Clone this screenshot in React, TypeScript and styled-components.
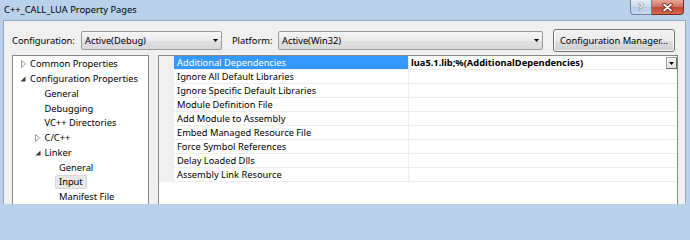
import React from "react";
import styled, { createGlobalStyle } from "styled-components";

const GlobalStyle = createGlobalStyle`
  html, body {
    margin: 0;
    padding: 0;
    background: #b9d1ea;
  }
  body {
    font-family: "Noto Sans", "Open Sans", sans-serif;
    font-size: 9.3px;
    color: #000;
  }
  * {
    box-sizing: border-box;
  }
`;

const Window = styled.div`
  width: 690px;
  height: 204px;
  overflow: hidden;
  display: flex;
  flex-direction: column;
  background: #b9d1ea;
  padding: 0 4px 0 3px;
`;

const TitleBar = styled.div`
  height: 20px;
  flex: none;
  display: flex;
  align-items: flex-start;
  justify-content: space-between;
`;

const Title = styled.span`
  line-height: 19px;
  padding-left: 1px;
  white-space: nowrap;
`;

const CaptionButtons = styled.div`
  display: flex;
  margin-right: 2px;
`;

const CaptionButton = styled.div<{ $close?: boolean }>`
  width: ${({ $close }) => ($close ? 32 : 22)}px;
  height: 15px;
  display: flex;
  align-items: center;
  justify-content: center;
  border: 1px solid ${({ $close }) => ($close ? "#7a2a22" : "#6f84a3")};
  border-top: none;
  border-left-width: ${({ $close }) => ($close ? 0 : 1)}px;
  border-radius: ${({ $close }) => ($close ? "0 0 4px 0" : "0 0 0 4px")};
  background: ${({ $close }) =>
    $close
      ? "linear-gradient(#e6a595, #d2705f 50%, #c5432f 51%, #d36b4c)"
      : "linear-gradient(#e3ecf7, #cbdbee 50%, #b8cce6 51%, #c9daef)"};
  color: #fff;
  font-size: 10px;
  font-weight: bold;
  text-shadow: 0 0 1px #3a4a60, 0 0 1px #3a4a60;
`;

const Dialog = styled.div`
  flex: 1;
  min-height: 0;
  display: flex;
  flex-direction: column;
  background: #f0f0f0;
  border: 1px solid #98a9bd;
  border-bottom: none;
  padding: 8px 7px 0 8px;
`;

const Toolbar = styled.div`
  height: 23px;
  flex: none;
  display: flex;
  align-items: center;
`;

const Label = styled.span<{ $width: number; $gap?: number }>`
  width: ${({ $width }) => $width}px;
  margin-left: ${({ $gap }) => $gap ?? 0}px;
  flex: none;
  white-space: nowrap;
`;

const Combo = styled.div<{ $width: number }>`
  width: ${({ $width }) => $width}px;
  height: 19px;
  flex: none;
  display: flex;
  align-items: center;
  justify-content: space-between;
  padding: 0 3px 0 3px;
  border: 1px solid #9b9b9b;
  border-radius: 2px;
  background: linear-gradient(#f7f7f7, #e9e9e9 50%, #e0e0e0 51%, #d9d9d9);
  white-space: nowrap;
`;

const Button = styled.div`
  width: 122px;
  height: 23px;
  margin-left: 10px;
  flex: none;
  display: flex;
  align-items: center;
  justify-content: center;
  border: 1px solid #707070;
  border-radius: 3px;
  background: linear-gradient(#f2f2f2, #ebebeb 50%, #dddddd 51%, #cfcfcf);
  box-shadow: inset 0 0 0 1px #fcfcfc;
  white-space: nowrap;
`;

const Content = styled.div`
  flex: 1;
  min-height: 0;
  margin-top: 3px;
  display: flex;
  gap: 9px;
`;

const Tree = styled.div`
  width: 137px;
  flex: none;
  background: #fff;
  border: 1px solid #828790;
  border-bottom: none;
  padding-top: 1px;
`;

const TreeRow = styled.div<{ $level: number }>`
  height: 14.74px;
  display: flex;
  align-items: center;
  padding-left: ${({ $level }) => 3 + $level * 14.5}px;
  white-space: nowrap;
`;

const Expander = styled.span`
  width: 14px;
  height: 14px;
  flex: none;
  display: flex;
  align-items: center;
  justify-content: center;
`;

const TreeLabel = styled.span<{ $selected?: boolean }>`
  line-height: 12px;
  padding: 0 3px;
  margin-left: -4px;
  border: 1px solid ${({ $selected }) => ($selected ? "#d9d9d9" : "transparent")};
  border-radius: 2px;
  background: ${({ $selected }) => ($selected ? "#e8e8e8" : "transparent")};
`;

const Grid = styled.div`
  flex: 1;
  min-width: 0;
  background: #fff;
  border: 1px solid #828790;
  border-bottom: none;
`;

const GridRow = styled.div`
  height: 14px;
  display: flex;
`;

const Gutter = styled.div`
  width: 15px;
  flex: none;
  background: #f0f0f0;
`;

const NameCell = styled.div<{ $selected?: boolean }>`
  width: 234px;
  flex: none;
  display: flex;
  align-items: center;
  padding-left: 3px;
  border-bottom: 1px solid #ededed;
  background: ${({ $selected }) => ($selected ? "#3399ff" : "#fff")};
  color: ${({ $selected }) => ($selected ? "#fff" : "#000")};
  white-space: nowrap;
`;

const ValueCell = styled.div`
  flex: 1;
  min-width: 0;
  display: flex;
  align-items: center;
  justify-content: space-between;
  padding-left: 2px;
  border-left: 1px solid #ededed;
  border-bottom: 1px solid #ededed;
  white-space: nowrap;
`;

const Value = styled.span`
  font-weight: bold;
`;

const DropButton = styled.span`
  width: 11px;
  height: 12px;
  align-self: flex-start;
  margin-top: 1px;
  display: flex;
  align-items: center;
  justify-content: center;
  border: 1px solid #a0a0a0;
  border-right-color: #6a6a6a;
  border-bottom-color: #6a6a6a;
  background: linear-gradient(#f8f8f8, #e2e2e2);
`;

const DownArrow = () => (
  <svg width="5" height="3" viewBox="0 0 5 3">
    <path d="M0 0 H5 L2.5 3 Z" fill="#000" />
  </svg>
);

const Collapsed = () => (
  <svg width="5" height="8" viewBox="0 0 5 8">
    <path d="M0.5 0.5 L4.5 4 L0.5 7.5 Z" fill="#fff" stroke="#9a9a9a" strokeWidth="1" />
  </svg>
);

const Expanded = () => (
  <svg width="6" height="6" viewBox="0 0 6 6">
    <path d="M5.5 0.5 V5.5 H0.5 Z" fill="#3c3c3c" />
  </svg>
);

const CloseGlyph = () => (
  <svg width="11" height="9" viewBox="0 0 11 9">
    <path d="M2 1.5 L9 7.5 M9 1.5 L2 7.5" stroke="#5b1e16" strokeWidth="3.4" strokeLinecap="round" />
    <path d="M2 1.5 L9 7.5 M9 1.5 L2 7.5" stroke="#fff" strokeWidth="1.8" strokeLinecap="round" />
  </svg>
);

type Node = { label: string; level: number; state?: "open" | "closed"; selected?: boolean };

const treeNodes: Node[] = [
  { label: "Common Properties", level: 0, state: "closed" },
  { label: "Configuration Properties", level: 0, state: "open" },
  { label: "General", level: 1 },
  { label: "Debugging", level: 1 },
  { label: "VC++ Directories", level: 1 },
  { label: "C/C++", level: 1, state: "closed" },
  { label: "Linker", level: 1, state: "open" },
  { label: "General", level: 2 },
  { label: "Input", level: 2, selected: true },
  { label: "Manifest File", level: 2 },
];

const properties = [
  "Additional Dependencies",
  "Ignore All Default Libraries",
  "Ignore Specific Default Libraries",
  "Module Definition File",
  "Add Module to Assembly",
  "Embed Managed Resource File",
  "Force Symbol References",
  "Delay Loaded Dlls",
  "Assembly Link Resource",
];

const App: React.FC = () => {
  return (
    <>
      <GlobalStyle />
      <Window>
        <TitleBar>
          <Title>C++_CALL_LUA Property Pages</Title>
          <CaptionButtons>
            <CaptionButton>?</CaptionButton>
            <CaptionButton $close>
              <CloseGlyph />
            </CaptionButton>
          </CaptionButtons>
        </TitleBar>
        <Dialog>
          <Toolbar>
            <Label $width={69}>Configuration:</Label>
            <Combo $width={141}>
              Active(Debug)
              <DownArrow />
            </Combo>
            <Label $width={46} $gap={10}>
              Platform:
            </Label>
            <Combo $width={265}>
              Active(Win32)
              <DownArrow />
            </Combo>
            <Button>Configuration Manager...</Button>
          </Toolbar>
          <Content>
            <Tree>
              {treeNodes.map((node, i) => (
                <TreeRow key={i} $level={node.level}>
                  <Expander>
                    {node.state === "closed" && <Collapsed />}
                    {node.state === "open" && <Expanded />}
                  </Expander>
                  <TreeLabel $selected={node.selected}>{node.label}</TreeLabel>
                </TreeRow>
              ))}
            </Tree>
            <Grid>
              {properties.map((name, i) => (
                <GridRow key={name}>
                  <Gutter />
                  <NameCell $selected={i === 0}>{name}</NameCell>
                  <ValueCell>
                    {i === 0 && (
                      <>
                        <Value>lua5.1.lib;%(AdditionalDependencies)</Value>
                        <DropButton>
                          <DownArrow />
                        </DropButton>
                      </>
                    )}
                  </ValueCell>
                </GridRow>
              ))}
            </Grid>
          </Content>
        </Dialog>
      </Window>
    </>
  );
};

export default App;
